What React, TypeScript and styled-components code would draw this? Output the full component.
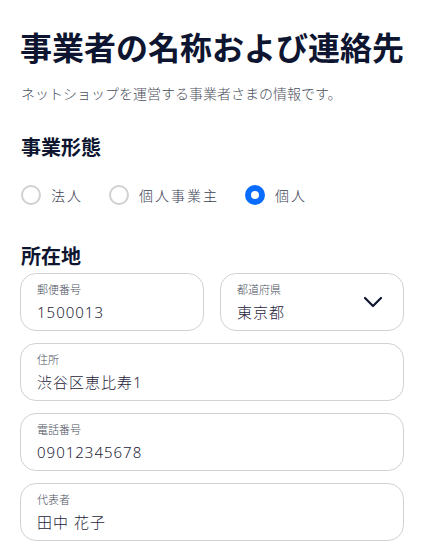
import React from "react";
import styled, { createGlobalStyle } from "styled-components";

const Global = createGlobalStyle`
  html, body { margin: 0; padding: 0; background: #fff; }
  body { font-family: "Noto Sans", "Noto Sans CJK JP", sans-serif; color: #0d1530; }
  * { box-sizing: border-box; }
`;

const Page = styled.div`
  padding: 26px 19px 20px 20px;
  display: flex;
  flex-direction: column;
`;

const Title = styled.h1`
  margin: 0;
  font-size: 32px;
  line-height: 44px;
  font-weight: 700;
  color: #0d1530;
`;

const Subtitle = styled.p`
  margin: 14px 0 0 1px;
  font-size: 14px;
  line-height: 20px;
  font-weight: 300;
  color: #4a4f5c;
`;

const SectionTitle = styled.h2<{ $top: number }>`
  margin: ${(p) => p.$top}px 0 0 1px;
  font-size: 20px;
  line-height: 28px;
  font-weight: 700;
  color: #0d1530;
`;

const RadioRow = styled.div`
  display: flex;
  align-items: center;
  gap: 26px;
  margin-top: 23px;
  padding-left: 1px;
`;

const RadioItem = styled.label`
  display: flex;
  align-items: center;
  gap: 10px;
  font-size: 14px;
  font-weight: 300;
  letter-spacing: 2px;
  color: #3a4052;
`;

const RadioCircle = styled.span<{ $checked?: boolean }>`
  width: 20px;
  height: 20px;
  border-radius: 50%;
  border: ${(p) => (p.$checked ? "6px solid #0a6cff" : "2px solid #cfd0d0")};
  background: #fff;
  flex: none;
`;

const Fields = styled.div`
  display: flex;
  flex-direction: column;
  gap: 12px;
  margin-top: 2px;
`;

const Row = styled.div`
  display: grid;
  grid-template-columns: 1fr 1fr;
  gap: 16px;
`;

const Box = styled.div`
  position: relative;
  height: 58px;
  border: 1px solid #d2d2d2;
  border-radius: 16px;
  padding: 8px 16px 0 16px;
  display: flex;
  flex-direction: column;
`;

const Label = styled.span`
  font-size: 11px;
  line-height: 16px;
  font-weight: 300;
  color: #4a4f5c;
`;

const Value = styled.span`
  margin-top: 4px;
  font-size: 15px;
  line-height: 20px;
  font-weight: 300;
  letter-spacing: 1px;
  color: #1e2438;
`;

const Chevron = styled.svg`
  position: absolute;
  right: 20px;
  top: 21px;
  width: 20px;
  height: 14px;
`;

function Field({ label, value, select }: { label: string; value: string; select?: boolean }) {
  return (
    <Box>
      <Label>{label}</Label>
      <Value>{value}</Value>
      {select && (
        <Chevron viewBox="0 0 20 14" fill="none">
          <path d="M2 3 L10 11 L18 3" stroke="#0d1530" strokeWidth="2.2" strokeLinecap="round" strokeLinejoin="round" />
        </Chevron>
      )}
    </Box>
  );
}

export default function App() {
  return (
    <>
      <Global />
      <Page>
        <Title>事業者の名称および連絡先</Title>
        <Subtitle>ネットショップを運営する事業者さまの情報です。</Subtitle>
        <SectionTitle $top={30}>事業形態</SectionTitle>
        <RadioRow>
          <RadioItem>
            <RadioCircle />
            法人
          </RadioItem>
          <RadioItem>
            <RadioCircle />
            個人事業主
          </RadioItem>
          <RadioItem>
            <RadioCircle $checked />
            個人
          </RadioItem>
        </RadioRow>
        <SectionTitle $top={38}>所在地</SectionTitle>
        <Fields>
          <Row>
            <Field label="郵便番号" value="1500013" />
            <Field label="都道府県" value="東京都" select />
          </Row>
          <Field label="住所" value="渋谷区恵比寿1" />
          <Field label="電話番号" value="09012345678" />
          <Field label="代表者" value="田中 花子" />
        </Fields>
      </Page>
    </>
  );
}
